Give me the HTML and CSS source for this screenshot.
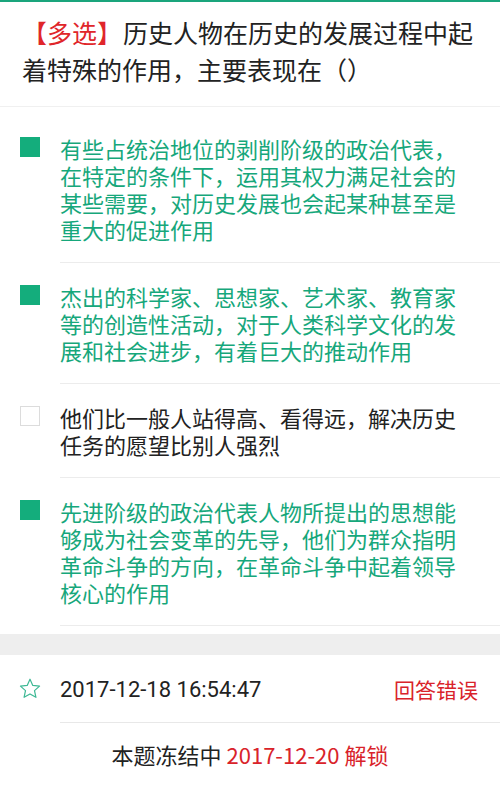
FILE: index.html
```html
<!DOCTYPE html>
<html lang="zh">
<head>
<meta charset="utf-8">
<link rel="stylesheet" href="styles.css">
</head>
<body>
<div class="page">
  <div class="question"><span class="tag">【多选】</span><span class="qtext">历史人物在历史的发展过程中起着特殊的作用，主要表现在（）</span></div>
  <ul class="options">
    <li class="option checked"><span class="box"></span><span class="text">有些占统治地位的剥削阶级的政治代表，在特定的条件下，运用其权力满足社会的某些需要，对历史发展也会起某种甚至是重大的促进作用</span></li>
    <li class="option checked"><span class="box"></span><span class="text">杰出的科学家、思想家、艺术家、教育家等的创造性活动，对于人类科学文化的发展和社会进步，有着巨大的推动作用</span></li>
    <li class="option"><span class="box"></span><span class="text">他们比一般人站得高、看得远，解决历史任务的愿望比别人强烈</span></li>
    <li class="option checked"><span class="box"></span><span class="text">先进阶级的政治代表人物所提出的思想能够成为社会变革的先导，他们为群众指明革命斗争的方向，在革命斗争中起着领导核心的作用</span></li>
  </ul>
  <div class="band"></div>
  <div class="meta">
    <svg class="star" viewBox="0 0 24 24" width="24" height="24"><path d="M12 2.2l2.8 6.2 6.75.72-5.05 4.55 1.43 6.65L12 16.9 6.07 20.32l1.43-6.65L2.45 9.12l6.75-.72z" fill="none" stroke="#3db894" stroke-width="1.2" stroke-linejoin="round"/></svg>
    <span class="date">2017-12-18 16:54:47</span>
    <span class="result">回答错误</span>
  </div>
  <div class="freeze">本题冻结中 <span class="red">2017-12-20 解锁</span></div>
</div>
</body>
</html>
```
FILE: styles.css
```css
html, body {
  margin: 0;
  padding: 0;
  background: #fff;
}
body {
  font-family: "Noto Sans CJK SC", "Noto Sans", sans-serif;
  color: #222;
}
.page {
  width: 500px;
  border-top: 2px solid #1aa57c;
}
.question {
  font-size: 25px;
  line-height: 37px;
  padding: 12px 18px 18px 22px;
  border-bottom: 1px solid #f0f0f0;
  color: #222;
}
.tag {
  color: #e0262a;
  margin-right: 1px;
}
.options {
  list-style: none;
  margin: 0;
  padding: 8px 0 0 0;
}
.option {
  display: flex;
  align-items: flex-start;
  padding: 20px 0 19px 0;
  border-bottom: 1px solid #ececec;
  margin-left: 60px;
  position: relative;
}
.box {
  position: absolute;
  left: -40px;
  top: 22px;
  width: 18px;
  height: 18px;
  border: 1px solid #dcdcdc;
  background: #fff;
  box-sizing: content-box;
}
.option.checked .box {
  background: #14ad7c;
  border-color: #14ad7c;
}
.text {
  font-size: 22px;
  line-height: 27px;
  padding-right: 32px;
  color: #222;
}
.option.checked .text {
  color: #16a77b;
}
.band {
  height: 21px;
  background: #eeeeee;
  margin-top: 8px;
}
.meta {
  display: flex;
  align-items: center;
  height: 68px;
  padding: 0 22px 0 18px;
  position: relative;
}
.meta::after {
  content: "";
  position: absolute;
  left: 60px;
  right: 0;
  bottom: 0;
  border-bottom: 1px solid #e8e8e8;
}
.star {
  flex: none;
  margin-right: 18px;
}
.date {
  font-size: 22px;
  font-family: Roboto, "Noto Sans", sans-serif;
  color: #222;
  flex: 1;
}
.result {
  font-size: 21px;
  color: #d9232a;
}
.freeze {
  text-align: center;
  font-size: 22px;
  line-height: 30px;
  padding: 16px 0;
  color: #222;
}
.red {
  color: #d9232a;
}
```
